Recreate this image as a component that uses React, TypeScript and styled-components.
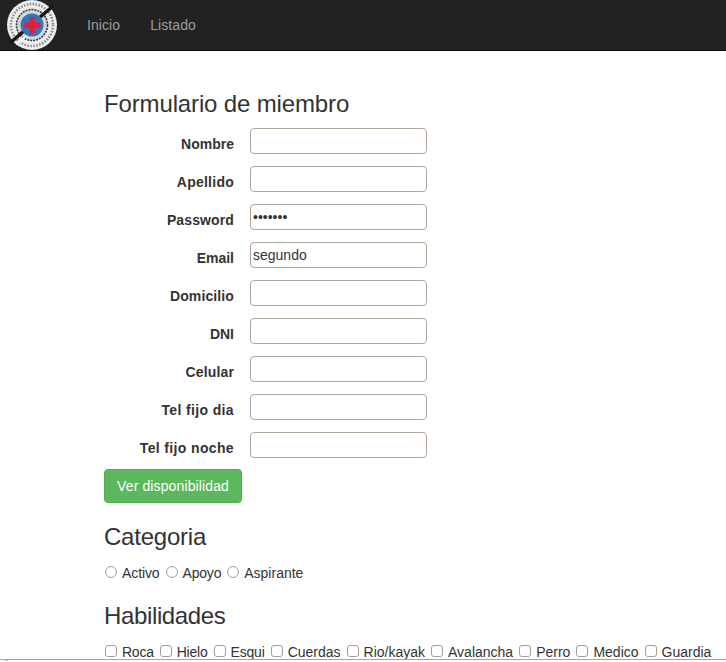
import React from "react";
import styled, { createGlobalStyle } from "styled-components";

const Global = createGlobalStyle`
  html, body { margin: 0; padding: 0; height: 100%; overflow: hidden; background: #fff; }
  body { font-family: "Liberation Sans", Arial, sans-serif; font-size: 14px; line-height: 20px; color: #333; }
  * { box-sizing: border-box; }
`;

const Page = styled.div`
  position: relative;
  width: 726px;
  height: 662px;
  overflow: hidden;
`;

const Navbar = styled.nav`
  height: 51px;
  background: #222;
  border-bottom: 1px solid #080808;
  display: flex;
  align-items: center;
  padding-left: 7px;
`;

const Logo = styled.svg`
  width: 50px;
  height: 50px;
  flex: none;
`;

const NavLinks = styled.div`
  display: flex;
  margin-left: 15px;
`;

const NavLink = styled.a`
  padding: 15px;
  color: #9d9d9d;
  font-size: 14px;
  line-height: 20px;
  letter-spacing: 0.08px;
`;

const Container = styled.main`
  padding: 40px 0 0 104px;
`;

const Heading = styled.h3<{ $spread: number }>`
  margin: 0;
  font-size: 24px;
  font-weight: 500;
  line-height: 26px;
  color: #333;
  letter-spacing: ${(p) => p.$spread}px;
`;

const Form = styled.form`
  display: flex;
  flex-direction: column;
  gap: 12px;
  margin-top: 11px;
`;

const Row = styled.div`
  display: flex;
  align-items: center;
  height: 26px;
`;

const Label = styled.label<{ $spread: number }>`
  width: 130px;
  text-align: right;
  font-weight: 700;
  font-size: 14px;
  margin-right: 16px;
  padding-top: 6px;
  letter-spacing: ${(p) => p.$spread}px;
`;

const Input = styled.input`
  width: 177px;
  height: 26px;
  padding: 0 2px;
  border: 1px solid #b0a498;
  border-radius: 4px;
  background: #fff;
  font-family: "Liberation Sans", Arial, sans-serif;
  font-size: 14px;
  color: #333;
  outline: none;
`;

const Button = styled.button`
  display: block;
  margin-top: 11px;
  width: 138px;
  height: 34px;
  background: #5cb85c;
  border: 1px solid #4cae4c;
  border-radius: 4px;
  color: #fff;
  font-family: "Liberation Sans", Arial, sans-serif;
  font-size: 14px;
  line-height: 20px;
  letter-spacing: 0.12px;
  padding: 0;
`;

const Section = styled.section<{ $top: number }>`
  margin-top: ${(p) => p.$top}px;
`;

const Options = styled.div<{ $top: number }>`
  display: flex;
  align-items: center;
  margin-top: ${(p) => p.$top}px;
  height: 20px;
  white-space: nowrap;
`;

const Option = styled.label`
  display: inline-flex;
  align-items: center;
  margin-right: 5px;
`;

const OptionText = styled.span<{ $spread: number }>`
  letter-spacing: ${(p) => p.$spread}px;
`;

const Control = styled.input`
  appearance: none;
  width: 12px;
  height: 12px;
  margin: 0 5px 3px 1px;
  border: 1px solid #a89e94;
  background: #fff;
  border-radius: ${(p) => (p.type === "radio" ? "50%" : "3px")};
`;

const BottomEdge = styled.div`
  position: absolute;
  left: 0;
  right: 0;
  bottom: 2px;
  height: 1px;
  background: #a8a49c;

  &::after {
    content: "";
    position: absolute;
    left: 5px;
    top: 1px;
    width: 3px;
    height: 1px;
    background: #c4c0b8;
  }
`;

const fields: [string, string, string, number][] = [
  ["Nombre", "text", "", 0],
  ["Apellido", "text", "", 0.25],
  ["Password", "password", "1234567", 0.12],
  ["Email", "text", "segundo", 0],
  ["Domicilio", "text", "", 0.12],
  ["DNI", "text", "", 0],
  ["Celular", "text", "", 0.14],
  ["Tel fijo dia", "text", "", 0.36],
  ["Tel fijo noche", "text", "", 0.36],
];

const skills: [string, number][] = [
  ["Roca", -0.25],
  ["Hielo", -0.2],
  ["Esqui", -0.2],
  ["Cuerdas", 0],
  ["Rio/kayak", 0],
  ["Avalancha", 0],
  ["Perro", 0],
  ["Medico", 0],
  ["Guardia", 0],
];
const categories: [string, number][] = [
  ["Activo", -0.1],
  ["Apoyo", -0.2],
  ["Aspirante", 0],
];

export default function App() {
  return (
    <Page>
      <Global />
      <Navbar>
        <Logo viewBox="0 0 50 50" aria-label="logo">
          <circle cx="25" cy="25" r="25" fill="#ececec" />
          <circle cx="25" cy="25" r="21" fill="none" stroke="#8a8a8a" strokeWidth="2.5" strokeDasharray="1.5 1.5" />
          <circle cx="25" cy="25" r="15.5" fill="#d4d6d8" stroke="#3a3a3a" strokeWidth="1.6" strokeDasharray="2 1" />
          <path d="M9 44 L23 33" stroke="#f6f6f6" strokeWidth="2.5" />
          <path d="M3 43 L46 6" stroke="#161616" strokeWidth="3.6" />
          <circle cx="25" cy="25" r="11.5" fill="#2f78bb" />
          <path d="M22.5 17h5.5v5.5h5.5v5.5H28v5.5h-5.5V28H17v-5.5h5.5z" fill="#e0203c" />
        </Logo>
        <NavLinks>
          <NavLink>Inicio</NavLink>
          <NavLink>Listado</NavLink>
        </NavLinks>
      </Navbar>
      <Container>
        <Heading $spread={-0.14}>Formulario de miembro</Heading>
        <Form>
          {fields.map(([label, type, value, spread]) => (
            <Row key={label}>
              <Label $spread={spread}>{label}</Label>
              <Input type={type} defaultValue={value} />
            </Row>
          ))}
        </Form>
        <Button type="button">Ver disponibilidad</Button>
        <Section $top={21}>
          <Heading $spread={-0.22}>Categoria</Heading>
          <Options $top={13}>
            {categories.map(([c, spread]) => (
              <Option key={c}>
                <Control type="radio" name="cat" />
                <OptionText $spread={spread}>{c}</OptionText>
              </Option>
            ))}
          </Options>
        </Section>
        <Section $top={20}>
          <Heading $spread={-0.36}>Habilidades</Heading>
          <Options $top={13}>
            {skills.map(([s, spread]) => (
              <Option key={s}>
                <Control type="checkbox" />
                <OptionText $spread={spread}>{s}</OptionText>
              </Option>
            ))}
          </Options>
        </Section>
      </Container>
      <BottomEdge />
    </Page>
  );
}
